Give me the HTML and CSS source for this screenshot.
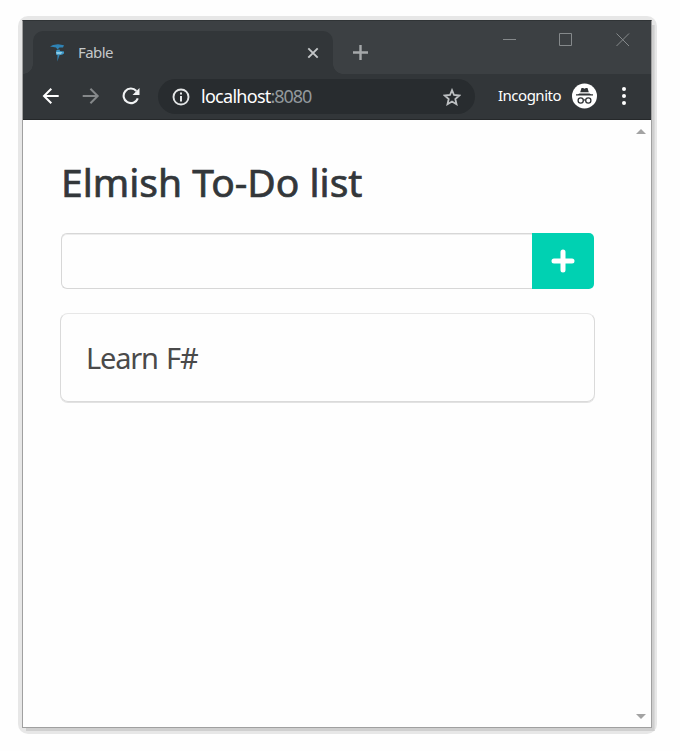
FILE: index.html
```html
<!DOCTYPE html>
<html lang="en">
<head>
<meta charset="utf-8">
<title>Fable</title>
<link rel="stylesheet" href="styles.css">
</head>
<body>
<div class="window">
  <header class="chrome">
    <div class="tabstrip">
      <div class="tab">
        <svg class="favicon" width="16" height="18" viewBox="0 0 16 18"><path d="M0 2.500 3 1 8 .3l6 .9-1 2.300H9.500L7.500 5.500 6 3.500z" fill="#2f83b5"/><path d="M6 8 6.500 6l3-.5.500 1.500 4 .5v2l-2 1.200H6z" fill="#3c97c8"/><path d="M6 8h6.500L10.500 10.500H7z" fill="#8acbe6"/><path d="M7.500 10.500h2.300L7.300 17.500z" fill="#2f83b5"/></svg>
        <span class="tab-title">Fable</span>
        <svg class="tab-close" width="12" height="12" viewBox="0 0 12 12"><path d="m1.300 1.300 9.400 9.400m0-9.400-9.400 9.400" stroke="#c4c7c9" stroke-width="1.900"/></svg>
      </div>
      <svg class="new-tab" width="16" height="16" viewBox="0 0 16 16"><path d="M8.500 1v15M1 8.500h15" stroke="#a5a8aa" stroke-width="2.400"/></svg>
      <svg class="controls" width="128" height="14" viewBox="0 0 128 14" fill="none" stroke="#85898b"><path d="M0 6.500h13M56.500.5h12v12h-12zM113.500.5l12.500 12.500m0-12.500-12.500 12.500"/></svg>
    </div>
    <div class="toolbar">
      <svg class="nav" width="18" height="18" viewBox="0 0 18 18" fill="none" stroke="#fff" stroke-width="2"><path d="M16.700 9H2m7.300-7.300L2 9l7.300 7.300"/></svg>
      <svg class="nav" width="18" height="18" viewBox="0 0 18 18" fill="none" stroke="#85888a" stroke-width="2"><path d="M.7 9h15M8.400 1.700 15.700 9l-7.300 7.300"/></svg>
      <svg class="nav" width="18" height="18" viewBox="0 0 18 18"><path d="M15.800 11.300A7.300 7.300 0 1 1 14.400 4" fill="none" stroke="#f1f3f4" stroke-width="2.100"/><path d="M17.500 1v7H10.500z" fill="#f1f3f4"/></svg>
      <div class="address">
        <svg class="info" width="18" height="18" viewBox="0 0 18 18"><circle cx="9" cy="9" r="7.500" fill="none" stroke="#e4e6e7" stroke-width="1.900"/><path d="M9 4.500v2M9 8v5.500" stroke="#e4e6e7" stroke-width="2"/></svg>
        <span class="host">localhost</span><span class="port">:8080</span>
        <svg class="star" width="18" height="18" viewBox="0 0 18 18"><path d="m9 2.200 2 4.800 5.300.5-4 3.500 1.200 5.200L9 13.500l-4.500 2.700L5.700 11l-4-3.500L7 7z" fill="none" stroke="#bdc0c2" stroke-width="1.800"/></svg>
      </div>
      <span class="mode">Incognito</span>
      <svg class="avatar" width="26" height="26" viewBox="0 0 26 26"><circle cx="13.500" cy="13" r="12.500" fill="#fff"/><path d="M10.500 5h1.600l1.400.7 1.400-.7h1.600l1.300 4.200H9.200zM8.500 10.500h10l1.500.7h2v1.300H5v-1.300h2z" fill="#303437"/><g fill="none" stroke="#303437" stroke-width="1.300"><circle cx="9.700" cy="17.500" r="2.600"/><circle cx="17.300" cy="17.500" r="2.600"/><path d="M12.300 17.200q1.200-.7 2.400 0"/></g></svg>
      <svg class="menu" width="4" height="18" viewBox="0 0 4 18" fill="#fff"><circle cx="2" cy="2" r="2"/><circle cx="2" cy="9" r="2"/><circle cx="2" cy="16" r="2"/></svg>
    </div>
  </header>
  <div class="viewport">
    <main class="page">
      <h1 class="title">Elmish To-Do list</h1>
      <form class="field">
        <input class="input" type="text" aria-label="New todo">
        <button class="add" type="button" aria-label="Add"><svg width="24" height="24" viewBox="0 0 24 24"><path d="M12 3v18M3 12h18" stroke="#fff" stroke-width="5" stroke-linecap="round"/></svg></button>
      </form>
      <div class="box"><p class="todo">Learn F#</p></div>
    </main>
    <div class="scrollbar">
      <svg width="10" height="5" viewBox="0 0 10 5"><path d="M0 5 5 0l5 5z" fill="#a3a3a3"/></svg>
      <svg width="10" height="5" viewBox="0 0 10 5"><path d="M0 0h10L5 5z" fill="#a3a3a3"/></svg>
    </div>
  </div>
</div>
</body>
</html>
```
FILE: styles.css
```css
* { box-sizing: border-box; }
body {
  margin: 0;
  padding: 20px 28px 23px 22px;
  height: 751px;
  background: #fefefe;
  font-family: "Noto Sans", "Open Sans", sans-serif;
  overflow: hidden;
}
svg { display: block; flex: none; }
.window {
  position: relative;
  display: flex;
  flex-direction: column;
  width: 630px;
  height: 708px;
  border: 1px solid #a0a0a0;
  border-top-color: #303436;
  box-shadow: 3px 4px 0 -1px #cfcfcf, 4px 4px 0 -1px #d9d9d9;
}
.window::before {
  content: "";
  position: absolute;
  inset: -5px -6px -7px -5px;
  z-index: -1;
  border-radius: 10px;
  background: #e7e7e7;
}
.chrome { height: 99px; background: #323639; border-bottom: 1px solid #25282a; }
.tabstrip {
  display: flex;
  align-items: flex-start;
  height: 53px;
  padding: 10px 22px 0 10px;
  background: #3c4043;
}
.tab {
  position: relative;
  display: flex;
  align-items: center;
  width: 300px;
  height: 43px;
  padding: 0 15px 0 17px;
  background: #323639;
  border-radius: 10px 10px 0 0;
}
.tab::before, .tab::after {
  content: "";
  position: absolute;
  bottom: 0;
  width: 10px;
  height: 10px;
}
.tab::before { left: -10px; background: radial-gradient(circle at 0 0, #3c4043 9.500px, #323639 10px); }
.tab::after { right: -10px; background: radial-gradient(circle at 100% 0, #3c4043 9.500px, #323639 10px); }
.tab-title {
  margin: 0 0 2px 12px;
  font-size: 15px;
  letter-spacing: -.6px;
  color: #c5c8ca;
}
.tab-close { margin-left: auto; margin-right: -1px; }
.new-tab { margin: 13px 0 0 19px; }
.controls { margin: 2px 0 0 auto; margin-right: -2px; }
.toolbar {
  display: flex;
  align-items: center;
  height: 45px;
  padding: 0 25px 1px 19px;
}
.nav { margin-right: 22px; }
.address {
  display: flex;
  align-items: center;
  width: 317px;
  height: 35px;
  margin: 1px 0 0 -4px;
  padding: 0 14px 0 14px;
  border-radius: 18px;
  background: #282c2f;
  font-size: 18px;
}
.info { margin-right: 11px; }
.host, .port { padding-bottom: 1px; }
.host { color: #fff; letter-spacing: -.72px; }
.port { color: #92989c; letter-spacing: -1.05px; }
.star { margin-left: auto; }
.mode { width: 63px; margin-left: 23px; padding-bottom: 2px; color: #fff; font-size: 15px; letter-spacing: -.5px; }
.avatar { margin-left: 10px; }
.menu { margin-left: 25px; }
.viewport { flex: 1; display: flex; background: #fefefe; }
.page { flex: 1; padding: 35px 39px 0 38px; }
.title {
  height: 54px;
  margin: 0 0 24px;
  font-size: 39px;
  font-weight: 400;
  -webkit-text-stroke: .7px #33373a;
  line-height: 54px;
  letter-spacing: 0;
  color: #33373a;
  white-space: nowrap;
}
.field { display: flex; width: 533px; height: 56px; margin: 0 0 25px; }
.input {
  flex: 1;
  min-width: 0;
  padding: 0 16px;
  border: 1px solid #d7d7d7;
  border-right: 0;
  border-radius: 6px 0 0 6px;
  background: #fefefe;
  box-shadow: inset 0 1px 0 #ededed;
}
.add {
  display: flex;
  align-items: center;
  justify-content: center;
  width: 62px;
  padding: 0 0 1px;
  border: 0;
  border-radius: 0 5px 5px 0;
  background: #00d1b2;
}
.box {
  width: 535px;
  height: 89px;
  margin-left: -1px;
  margin-top: -1px;
  padding: 23px 25px;
  border: 1px solid #dadada;
  border-top-color: #e7e7e7;
  border-radius: 8px;
  box-shadow: 0 1px 0 #e2e2e2;
}
.todo { margin: 0; font-size: 29px; line-height: 42px; letter-spacing: -1.2px; word-spacing: 2px; color: #4a4a4a; }
.scrollbar {
  display: flex;
  flex-direction: column;
  justify-content: space-between;
  width: 14px;
  margin-right: 1px;
  padding: 9px 0 8px;
}
```
